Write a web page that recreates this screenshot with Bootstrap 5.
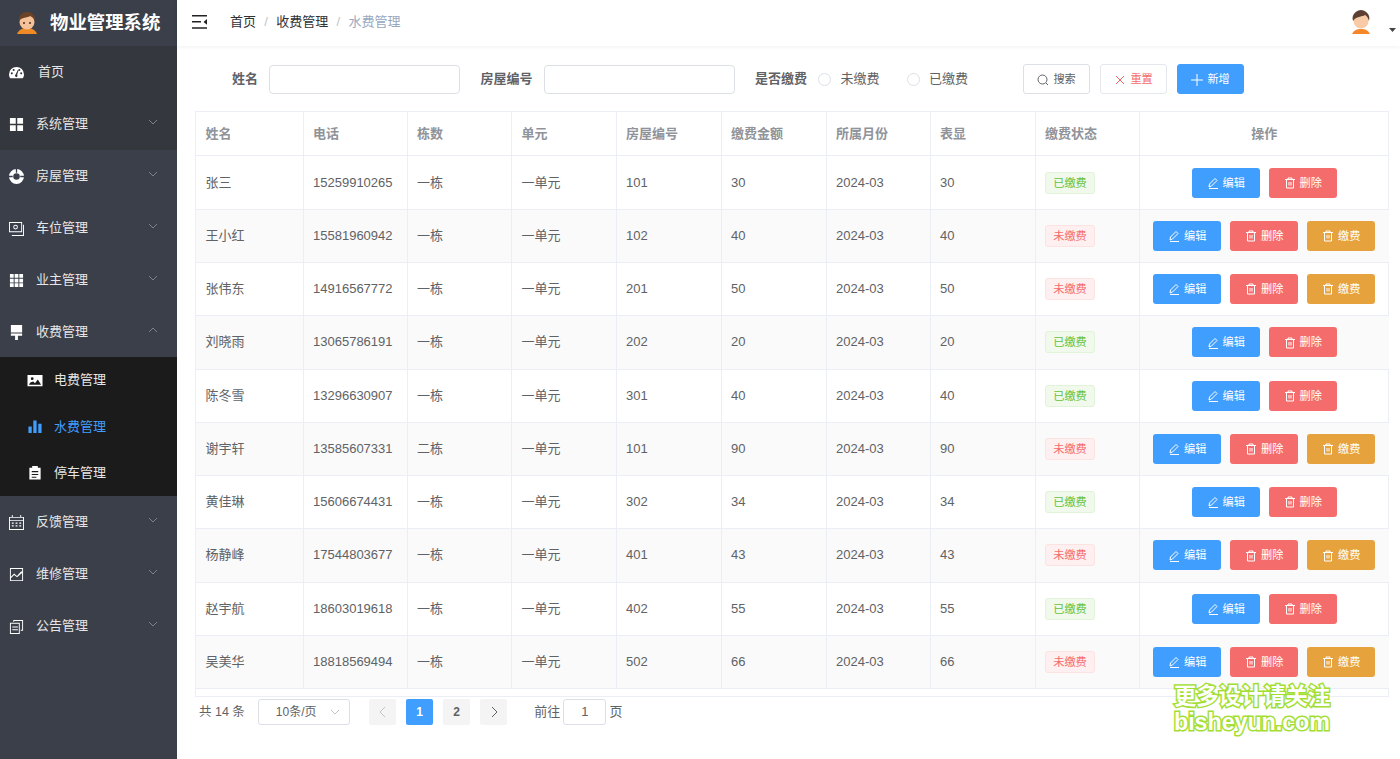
<!DOCTYPE html>
<html lang="zh-CN">
<head>
<meta charset="utf-8">
<title>物业管理系统</title>
<link href="https://cdn.jsdelivr.net/npm/bootstrap@5.3.0/dist/css/bootstrap.min.css" rel="stylesheet">
<style>
html,body{height:759px;overflow:hidden}
body{font-family:"Liberation Sans","Noto Sans CJK SC",sans-serif;font-size:13px;color:#606266;background:#fff}
.shell{height:759px}
.side{width:177px;flex:none;background:#3a3f4a;color:#eaeaea}
.brand{height:46px;gap:11px;padding-left:15px;color:#fff;font-size:18.4px;font-weight:700}
.mitem{height:52px;color:#e6e6e6;padding-left:9px;padding-right:19px}
.mitem.dark1{background:#34373d}
.mitem .ico{width:15px;height:15px;flex:none;margin-right:12px;fill:#fff}
.mitem .lbl{flex:1}
.mitem .chev{width:10px;height:10px;fill:none;stroke:#7d838d;stroke-width:1;margin-top:-5px}
.home{padding-left:38px;position:relative}
.home .ico{position:absolute;left:9px;top:19px;margin:0}
.subm{background:#1b1b1b;height:139px;margin-top:-1px}
.sitem{height:46.300px;padding-left:27px;color:#e6e6e6}
.sitem .ico{width:16px;height:15px;flex:none;margin-right:11px;fill:#fff}
.sitem.on{color:#409eff}
.sitem.on .ico{fill:#409eff}
.mainp{min-width:0}
.topb{height:46px;padding:0 4px 2px 15px;box-shadow:0 1px 4px rgba(0,21,41,.06);position:relative}
.crumb{margin-left:22px;color:#303133}
.crumb .sp{color:#c0c4cc;margin:0 8.300px}
.crumb .cur{color:#97a8be}
.caretx{margin-left:15px;margin-top:16px}
.filt{height:65px;padding-left:55px;padding-top:1px}
.flbl{font-weight:700;color:#606266;margin-right:11px}
.finp{width:191px;height:29px;border:1px solid #dcdfe6;border-radius:4px;background:#fff}
.fgap{margin-right:20.500px}
.radi{width:13px;height:13px;border:1px solid #dcdfe6;border-radius:50%;margin-right:9.500px;flex:none}
.rt1{margin-right:27px}
.rt2{margin-right:55px}
.bx{height:30px;width:67px;font-size:11.200px;border-radius:3px;border:1px solid #dcdfe6;background:#fff;color:#606266;padding:1px 0 0}
.bx svg{width:12px;height:12px;margin-right:4px;vertical-align:-2.500px}
.bx.rst{color:#f56c6c;border-color:#e4e7ed}
.bx.pri{background:#409eff;border-color:#409eff;color:#fff}
.bgrp{gap:10px}
.wrapt{margin:0 11px 0 18px;height:586px;border:1px solid #ebeef5}
.tbx{table-layout:fixed;width:1193px;border-collapse:collapse;margin:0}
.tbx th{height:43px;padding:0 9.500px;font-weight:700;color:#909399;border-right:1px solid #ebeef5;border-bottom:1px solid #ebeef5;vertical-align:middle}
.tbx td{height:53px;padding:0 9.500px;color:#606266;border-right:1px solid #ebeef5;border-bottom:1px solid #ebeef5;vertical-align:middle}
.tbx tr:nth-child(4) td,.tbx tr:nth-child(8) td{height:54px}
.tbx tr:first-child td{height:54px;padding-top:1px}
.tbx th:last-child,.tbx td:last-child{border-right:0}
.tbx tr:nth-child(even) td{background:#fafafa}
.tagx{display:inline-block;height:22px;line-height:20px;width:50px;text-align:center;font-size:11.200px;border-radius:3px;border:1px solid}
.tagx.ok{background:#f0f9eb;border-color:#e1f3d8;color:#67c23a}
.tagx.no{background:#fef0f0;border-color:#fde2e2;color:#f56c6c}
.opsx{gap:9px}
.bo{width:68px;height:30px;font-size:11.200px;color:#fff;border-radius:3px;border:0;padding:1px 0 0}
.bo svg{width:12px;height:12px;margin-right:4px;vertical-align:-2.500px;fill:none;stroke:#fff;stroke-width:1}
.bo.e{background:#409eff}.bo.d{background:#f56c6c}.bo.p{background:#e6a23c}
.pager{padding-left:22px;height:30px}
.pgtot{font-size:12.500px}
.pgsel{width:92px;height:26px;border:1px solid #dcdfe6;border-radius:3px;margin-left:13px;margin-right:19px;font-size:12px;padding-left:17px;padding-right:9px;color:#606266}
.pgb{width:27.500px;height:26px;background:#f4f4f5;border-radius:2px;font-weight:700;font-size:12px;color:#606266;margin-right:9.500px}
.pgb.on{background:#409eff;color:#fff}
.pgb.off{color:#c0c4cc}
.pgt{margin-left:17.500px}
.pgin{width:43px;height:26px;border:1px solid #dcdfe6;border-radius:3px;margin:0 3px}
.wm{position:absolute;left:1174px;top:681px;color:#fff;font-weight:700;-webkit-text-stroke:3px #a3de33;paint-order:stroke fill;line-height:27.500px}
.wm .a{font-size:22.300px;font-family:"Noto Sans CJK SC",sans-serif;display:block}
.wm .b{font-size:23.200px;font-family:"Liberation Sans",sans-serif;display:block}
</style>
</head>
<body>
<div class="d-flex shell position-relative">
<aside class="side">
  <div class="brand d-flex align-items-center">
    <svg width="24" height="26" viewBox="0 0 24 26"><path d="M2 24c2-5 6-6 10-6s8 1 10 6z" fill="#f08a24"/><circle cx="12" cy="12" r="7.500" fill="#f4c199"/><path d="M4 11C3 5 8 2 12 2s9 3 8 9c-1-3-3-4-5-5-3 2-8 1-11 5z" fill="#6b4226"/><circle cx="9" cy="13" r="1" fill="#4a2c17"/><circle cx="15" cy="13" r="1" fill="#4a2c17"/></svg>
    <span>物业管理系统</span>
  </div>
  <div class="mitem dark1 home d-flex align-items-center">
    <svg class="ico" viewBox="0 0 16 16"><path fill-rule="evenodd" d="M8 2a8 8 0 0 0-8 8c0 2 .7 3.300 1.500 4h13c.8-.7 1.500-2 1.500-4a8 8 0 0 0-8-8zM3 10a1.100 1.100 0 1 1 0-2.200A1.100 1.100 0 0 1 3 10zm2-3.500a1.100 1.100 0 1 1 0-2.200 1.100 1.100 0 0 1 0 2.200zM8 13a1.700 1.700 0 0 1-1-3l2.500-5 .8.4L8.700 10.300A1.700 1.700 0 0 1 8 13zm3-6.500a1.100 1.100 0 1 1 0-2.200 1.100 1.100 0 0 1 0 2.200zM13 10a1.100 1.100 0 1 1 0-2.200 1.100 1.100 0 0 1 0 2.200z"/></svg>
    <span>首页</span>
  </div>
  <div class="mitem dark1 d-flex align-items-center">
    <svg class="ico" viewBox="0 0 16 16"><path d="M1 1h6.200v6.200H1zM8.800 1H15v6.200H8.800zM1 8.800h6.200V15H1zM8.800 8.800H15V15H8.800z"/></svg>
    <span class="lbl">系统管理</span>
    <svg class="chev" viewBox="0 0 10 10"><path d="M1 3l4 4 4-4"/></svg>
  </div>
  <div class="mitem d-flex align-items-center">
    <svg class="ico" viewBox="0 0 16 16"><path fill-rule="evenodd" d="M8 0a8 8 0 1 1 0 16A8 8 0 0 1 8 0zm0 4.500a3.500 3.500 0 1 0 0 7 3.500 3.500 0 0 0 0-7z"/><path d="M0 7.300h4v1.400H0zM12 7.300h4v1.400h-4zM7.300 0h1.400v4H7.300z" fill="#3a3f4a"/></svg>
    <span class="lbl">房屋管理</span>
    <svg class="chev" viewBox="0 0 10 10"><path d="M1 3l4 4 4-4"/></svg>
  </div>
  <div class="mitem d-flex align-items-center">
    <svg class="ico" viewBox="0 0 16 16"><path fill-rule="evenodd" d="M0 1h14v11H0zm1 1v9h12V2zM15 4h1v12H3v-1h12z"/><path fill-rule="evenodd" d="M7 4a2.500 2.500 0 1 1 0 5 2.500 2.500 0 0 1 0-5zm0 1a1.500 1.500 0 1 0 0 3 1.500 1.500 0 0 0 0-3z"/></svg>
    <span class="lbl">车位管理</span>
    <svg class="chev" viewBox="0 0 10 10"><path d="M1 3l4 4 4-4"/></svg>
  </div>
  <div class="mitem d-flex align-items-center">
    <svg class="ico" viewBox="0 0 16 16"><path d="M1 1h4v4H1zM6 1h4v4H6zM11 1h4v4h-4zM1 6h4v4H1zM6 6h4v4H6zM11 6h4v4h-4zM1 11h4v4H1zM6 11h4v4H6zM11 11h4v4h-4z"/></svg>
    <span class="lbl">业主管理</span>
    <svg class="chev" viewBox="0 0 10 10"><path d="M1 3l4 4 4-4"/></svg>
  </div>
  <div class="mitem d-flex align-items-center">
    <svg class="ico" viewBox="0 0 16 16"><path d="M2 0h12v8H2zM2 9h12v2.500H2zM6.500 11.500h3V16h-3z"/></svg>
    <span class="lbl">收费管理</span>
    <svg class="chev" viewBox="0 0 10 10"><path d="M1 7l4-4 4 4"/></svg>
  </div>
  <div class="subm">
    <div class="sitem d-flex align-items-center">
      <svg class="ico" viewBox="0 0 16 16"><path fill-rule="evenodd" d="M0 2h16v12H0zm3 8l-1.500 2.500h13L11 7l-3 4-2-2zM5 4.500a1.500 1.500 0 1 0 0 3 1.500 1.500 0 0 0 0-3z"/></svg>
      <span>电费管理</span>
    </div>
    <div class="sitem on d-flex align-items-center">
      <svg class="ico" viewBox="0 0 16 16"><path d="M1 8h3.500v7H1zM6.200 1.500h3.500V15H6.200zM11.500 5H15v10h-3.500z"/></svg>
      <span>水费管理</span>
    </div>
    <div class="sitem d-flex align-items-center">
      <svg class="ico" viewBox="0 0 16 16"><path fill-rule="evenodd" d="M5 1h6v2h3v12.500H2V3h3zM4.500 6.500v1.200h7V6.500zm0 3v1.200h7V9.500zm0 3v1h5v-1z"/></svg>
      <span>停车管理</span>
    </div>
  </div>
  <div class="mitem d-flex align-items-center">
    <svg class="ico" viewBox="0 0 16 16"><path fill-rule="evenodd" d="M3 0h1v2h8V0h1v2h3v14H0V2h3zM1 3v2.500h14V3zm0 3.500V15h14V6.500zM3 8h2v1.300H3zm4 0h2v1.300H7zm4 0h2v1.300h-2zm-8 3h2v1.300H3zm4 0h2v1.300H7zm4 0h2v1.300h-2z"/></svg>
    <span class="lbl">反馈管理</span>
    <svg class="chev" viewBox="0 0 10 10"><path d="M1 3l4 4 4-4"/></svg>
  </div>
  <div class="mitem d-flex align-items-center">
    <svg class="ico" viewBox="0 0 16 16"><path fill-rule="evenodd" d="M1 1h14v14H1zm1 1v8.500l3.500-3.500 3 2.500L13 4.500l1 .5V2zm12 4.500L8.600 11 5.500 8.500 2 12v2h12z"/></svg>
    <span class="lbl">维修管理</span>
    <svg class="chev" viewBox="0 0 10 10"><path d="M1 3l4 4 4-4"/></svg>
  </div>
  <div class="mitem d-flex align-items-center">
    <svg class="ico" viewBox="0 0 16 16"><path fill-rule="evenodd" d="M1 4h10.500v12H1zm1 1v10h8.500V5zM4.500 1H15v11.500h-2.500v-1H14V2H5.500v1h-1zM3.500 8h6v1h-6zm0 3h6v1h-6z"/></svg>
    <span class="lbl">公告管理</span>
    <svg class="chev" viewBox="0 0 10 10"><path d="M1 3l4 4 4-4"/></svg>
  </div>
</aside>
<main class="mainp flex-grow-1">
  <div class="topb d-flex align-items-center">
    <svg width="16" height="14" viewBox="0 0 16 14"><path d="M0 0h15v1.600H0zM0 6h9v1.600H0zM0 12.200h15v1.600H0zM15 4v5.800L11.500 7z" fill="#222"/></svg>
    <div class="crumb flex-grow-1"><span>首页</span><span class="sp">/</span><span>收费管理</span><span class="sp">/</span><span class="cur">水费管理</span></div>
    <svg width="26" height="26" viewBox="0 0 26 26"><path d="M4 25c2-4 5-5 9-5s7 1 9 5z" fill="#f5862a"/><circle cx="13" cy="12" r="7.500" fill="#f8cba6"/><path d="M5 12C3 5 9 1 13 1s10 4 8 11c-1-3-2-5-4-6-3 2-9 1-12 6z" fill="#5d4033"/></svg>
    <svg class="caretx" width="7" height="4" viewBox="0 0 7 4"><path d="M0 0h7L3.500 4z" fill="#444"/></svg>
  </div>
  <form class="filt d-flex align-items-center">
    <span class="flbl">姓名</span><div class="finp fgap"></div>
    <span class="flbl">房屋编号</span><div class="finp fgap"></div>
    <span class="flbl">是否缴费</span>
    <span class="radi"></span><span class="rt1">未缴费</span>
    <span class="radi"></span><span class="rt2">已缴费</span>
    <div class="bgrp d-flex">
      <button type="button" class="bx"><svg viewBox="0 0 12 12" fill="none" stroke="#606266"><circle cx="5.500" cy="5.500" r="4.500"/><path d="M9 9l2 2"/></svg>搜索</button>
      <button type="button" class="bx rst"><svg viewBox="0 0 12 12" fill="none" stroke="#f56c6c"><path d="M2 2l8 8M10 2l-8 8"/></svg>重置</button>
      <button type="button" class="bx pri"><svg viewBox="0 0 12 12" fill="none" stroke="#fff"><path d="M6 0v12M0 6h12"/></svg>新增</button>
    </div>
  </form>
  <div class="wrapt">
    <table class="tbx">
      <colgroup><col style="width:107px"><col style="width:104px"><col style="width:104.500px"><col style="width:104.500px"><col style="width:105px"><col style="width:105px"><col style="width:104px"><col style="width:105px"><col style="width:104px"><col></colgroup>
      <thead><tr><th>姓名</th><th>电话</th><th>栋数</th><th>单元</th><th>房屋编号</th><th>缴费金额</th><th>所属月份</th><th>表显</th><th>缴费状态</th><th class="text-center">操作</th></tr></thead>
      <tbody>
      <tr><td>张三</td><td>15259910265</td><td>一栋</td><td>一单元</td><td>101</td><td>30</td><td>2024-03</td><td>30</td><td><span class="tagx ok">已缴费</span></td><td><div class="opsx d-flex justify-content-center"><button type="button" class="bo e"><svg viewBox="0 0 12 12"><path d="M2 10l.5-3L8 1.500l2 2L4.500 9zM2 11.500h9"/></svg>编辑</button><button type="button" class="bo d"><svg viewBox="0 0 12 12"><path d="M1 2.500h10M4 2.500V1h4v1.500M2.500 2.500V11h7V2.500M5 5v3.500M7 5v3.500"/></svg>删除</button></div></td></tr>
      <tr><td>王小红</td><td>15581960942</td><td>一栋</td><td>一单元</td><td>102</td><td>40</td><td>2024-03</td><td>40</td><td><span class="tagx no">未缴费</span></td><td><div class="opsx d-flex justify-content-center"><button type="button" class="bo e"><svg viewBox="0 0 12 12"><path d="M2 10l.5-3L8 1.500l2 2L4.500 9zM2 11.500h9"/></svg>编辑</button><button type="button" class="bo d"><svg viewBox="0 0 12 12"><path d="M1 2.500h10M4 2.500V1h4v1.500M2.500 2.500V11h7V2.500M5 5v3.500M7 5v3.500"/></svg>删除</button><button type="button" class="bo p"><svg viewBox="0 0 12 12"><path d="M1 2.500h10M4 2.500V1h4v1.500M2.500 2.500V11h7V2.500M5 5v3.500M7 5v3.500"/></svg>缴费</button></div></td></tr>
      <tr><td>张伟东</td><td>14916567772</td><td>一栋</td><td>一单元</td><td>201</td><td>50</td><td>2024-03</td><td>50</td><td><span class="tagx no">未缴费</span></td><td><div class="opsx d-flex justify-content-center"><button type="button" class="bo e"><svg viewBox="0 0 12 12"><path d="M2 10l.5-3L8 1.500l2 2L4.500 9zM2 11.500h9"/></svg>编辑</button><button type="button" class="bo d"><svg viewBox="0 0 12 12"><path d="M1 2.500h10M4 2.500V1h4v1.500M2.500 2.500V11h7V2.500M5 5v3.500M7 5v3.500"/></svg>删除</button><button type="button" class="bo p"><svg viewBox="0 0 12 12"><path d="M1 2.500h10M4 2.500V1h4v1.500M2.500 2.500V11h7V2.500M5 5v3.500M7 5v3.500"/></svg>缴费</button></div></td></tr>
      <tr><td>刘晓雨</td><td>13065786191</td><td>一栋</td><td>一单元</td><td>202</td><td>20</td><td>2024-03</td><td>20</td><td><span class="tagx ok">已缴费</span></td><td><div class="opsx d-flex justify-content-center"><button type="button" class="bo e"><svg viewBox="0 0 12 12"><path d="M2 10l.5-3L8 1.500l2 2L4.500 9zM2 11.500h9"/></svg>编辑</button><button type="button" class="bo d"><svg viewBox="0 0 12 12"><path d="M1 2.500h10M4 2.500V1h4v1.500M2.500 2.500V11h7V2.500M5 5v3.500M7 5v3.500"/></svg>删除</button></div></td></tr>
      <tr><td>陈冬雪</td><td>13296630907</td><td>一栋</td><td>一单元</td><td>301</td><td>40</td><td>2024-03</td><td>40</td><td><span class="tagx ok">已缴费</span></td><td><div class="opsx d-flex justify-content-center"><button type="button" class="bo e"><svg viewBox="0 0 12 12"><path d="M2 10l.5-3L8 1.500l2 2L4.500 9zM2 11.500h9"/></svg>编辑</button><button type="button" class="bo d"><svg viewBox="0 0 12 12"><path d="M1 2.500h10M4 2.500V1h4v1.500M2.500 2.500V11h7V2.500M5 5v3.500M7 5v3.500"/></svg>删除</button></div></td></tr>
      <tr><td>谢宇轩</td><td>13585607331</td><td>二栋</td><td>一单元</td><td>101</td><td>90</td><td>2024-03</td><td>90</td><td><span class="tagx no">未缴费</span></td><td><div class="opsx d-flex justify-content-center"><button type="button" class="bo e"><svg viewBox="0 0 12 12"><path d="M2 10l.5-3L8 1.500l2 2L4.500 9zM2 11.500h9"/></svg>编辑</button><button type="button" class="bo d"><svg viewBox="0 0 12 12"><path d="M1 2.500h10M4 2.500V1h4v1.500M2.500 2.500V11h7V2.500M5 5v3.500M7 5v3.500"/></svg>删除</button><button type="button" class="bo p"><svg viewBox="0 0 12 12"><path d="M1 2.500h10M4 2.500V1h4v1.500M2.500 2.500V11h7V2.500M5 5v3.500M7 5v3.500"/></svg>缴费</button></div></td></tr>
      <tr><td>黄佳琳</td><td>15606674431</td><td>一栋</td><td>一单元</td><td>302</td><td>34</td><td>2024-03</td><td>34</td><td><span class="tagx ok">已缴费</span></td><td><div class="opsx d-flex justify-content-center"><button type="button" class="bo e"><svg viewBox="0 0 12 12"><path d="M2 10l.5-3L8 1.500l2 2L4.500 9zM2 11.500h9"/></svg>编辑</button><button type="button" class="bo d"><svg viewBox="0 0 12 12"><path d="M1 2.500h10M4 2.500V1h4v1.500M2.500 2.500V11h7V2.500M5 5v3.500M7 5v3.500"/></svg>删除</button></div></td></tr>
      <tr><td>杨静峰</td><td>17544803677</td><td>一栋</td><td>一单元</td><td>401</td><td>43</td><td>2024-03</td><td>43</td><td><span class="tagx no">未缴费</span></td><td><div class="opsx d-flex justify-content-center"><button type="button" class="bo e"><svg viewBox="0 0 12 12"><path d="M2 10l.5-3L8 1.500l2 2L4.500 9zM2 11.500h9"/></svg>编辑</button><button type="button" class="bo d"><svg viewBox="0 0 12 12"><path d="M1 2.500h10M4 2.500V1h4v1.500M2.500 2.500V11h7V2.500M5 5v3.500M7 5v3.500"/></svg>删除</button><button type="button" class="bo p"><svg viewBox="0 0 12 12"><path d="M1 2.500h10M4 2.500V1h4v1.500M2.500 2.500V11h7V2.500M5 5v3.500M7 5v3.500"/></svg>缴费</button></div></td></tr>
      <tr><td>赵宇航</td><td>18603019618</td><td>一栋</td><td>一单元</td><td>402</td><td>55</td><td>2024-03</td><td>55</td><td><span class="tagx ok">已缴费</span></td><td><div class="opsx d-flex justify-content-center"><button type="button" class="bo e"><svg viewBox="0 0 12 12"><path d="M2 10l.5-3L8 1.500l2 2L4.500 9zM2 11.500h9"/></svg>编辑</button><button type="button" class="bo d"><svg viewBox="0 0 12 12"><path d="M1 2.500h10M4 2.500V1h4v1.500M2.500 2.500V11h7V2.500M5 5v3.500M7 5v3.500"/></svg>删除</button></div></td></tr>
      <tr><td>吴美华</td><td>18818569494</td><td>一栋</td><td>一单元</td><td>502</td><td>66</td><td>2024-03</td><td>66</td><td><span class="tagx no">未缴费</span></td><td><div class="opsx d-flex justify-content-center"><button type="button" class="bo e"><svg viewBox="0 0 12 12"><path d="M2 10l.5-3L8 1.500l2 2L4.500 9zM2 11.500h9"/></svg>编辑</button><button type="button" class="bo d"><svg viewBox="0 0 12 12"><path d="M1 2.500h10M4 2.500V1h4v1.500M2.500 2.500V11h7V2.500M5 5v3.500M7 5v3.500"/></svg>删除</button><button type="button" class="bo p"><svg viewBox="0 0 12 12"><path d="M1 2.500h10M4 2.500V1h4v1.500M2.500 2.500V11h7V2.500M5 5v3.500M7 5v3.500"/></svg>缴费</button></div></td></tr>
      </tbody>
    </table>
  </div>
  <div class="pager d-flex align-items-center">
    <span class="pgtot">共 14 条</span>
    <div class="pgsel d-flex align-items-center justify-content-between"><span>10条/页</span><svg width="10" height="10" viewBox="0 0 10 10" fill="none" stroke="#c0c4cc"><path d="M1 3l4 4 4-4"/></svg></div>
    <div class="pgb off d-flex align-items-center justify-content-center"><svg width="10" height="12" viewBox="0 0 10 12" fill="none" stroke="#c0c4cc"><path d="M7 1L2 6l5 5"/></svg></div>
    <div class="pgb on d-flex align-items-center justify-content-center">1</div>
    <div class="pgb d-flex align-items-center justify-content-center">2</div>
    <div class="pgb d-flex align-items-center justify-content-center"><svg width="10" height="12" viewBox="0 0 10 12" fill="none" stroke="#606266"><path d="M3 1l5 5-5 5"/></svg></div>
    <span class="pgt">前往</span>
    <div class="pgin d-flex align-items-center justify-content-center">1</div>
    <span>页</span>
  </div>
  <div class="wm"><span class="a">更多设计请关注</span><span class="b">bisheyun.com</span></div>
</main>
</div>
<script src="https://cdn.jsdelivr.net/npm/bootstrap@5.3.0/dist/js/bootstrap.bundle.min.js"></script>
</body>
</html>
